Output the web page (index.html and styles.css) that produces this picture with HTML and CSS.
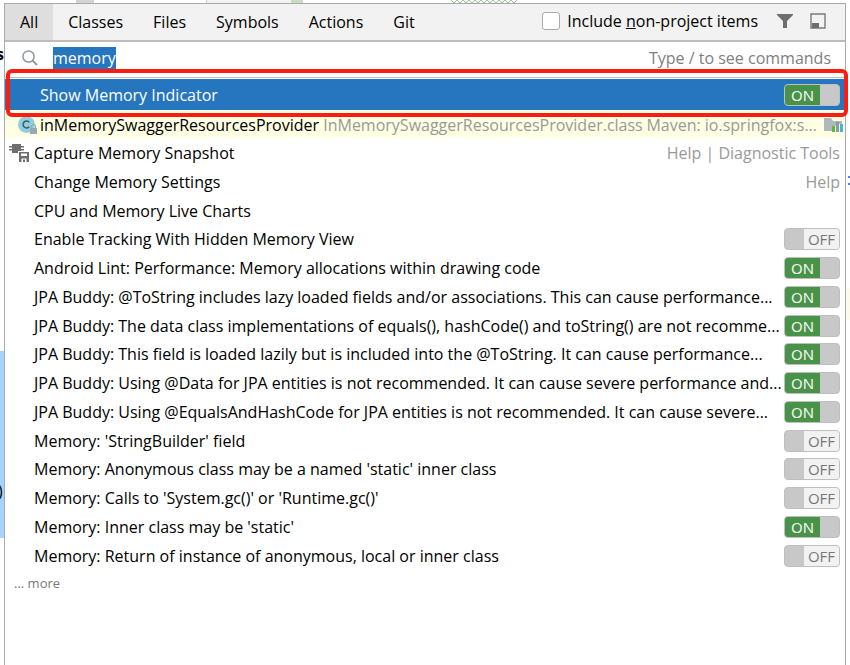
FILE: index.html
```
<!DOCTYPE html>
<html lang="en">
<head>
    <meta charset="utf-8">
    <title>Search Everywhere</title>
    <link rel="stylesheet" href="styles.css">
</head>
<body>
    <!-- bits of the editor that show around the popup -->
    <div class="editor" aria-hidden="true">
        <span class="gutter-mark"></span>
        <span class="change-mark"></span>
        <span class="tab-edge"></span>
        <span class="selection"></span>
        <span class="caret-line"></span>
        <span class="code code-s">s</span>
        <span class="code code-paren">)</span>
        <span class="code code-colon">:</span>
        <svg class="squiggle" width="68" height="3" viewBox="0 0 68 3">
            <path d="M0 0l3 3 3-3 3 3 3-3 3 3 3-3 3 3 3-3 3 3 3-3 3 3 3-3 3 3 3-3 3 3 3-3 3 3 3-3 3 3 3-3 3 3 3-3" fill="none" stroke="#9cc59c"/>
        </svg>
    </div>

    <div class="popup">
        <div class="header">
            <div class="tabs">
                <button type="button" class="tab active">All</button>
                <button type="button" class="tab">Classes</button>
                <button type="button" class="tab">Files</button>
                <button type="button" class="tab">Symbols</button>
                <button type="button" class="tab">Actions</button>
                <button type="button" class="tab">Git</button>
            </div>
            <div class="options">
                <input type="checkbox" id="non-project">
                <label for="non-project">Include <u>n</u>on-project items</label>
                <button type="button" class="icon-button" aria-label="Filter">
                    <svg width="16" height="16" viewBox="0 0 16 16"><path d="M0 1h16v1L10 8v7H6V8L0 2z" fill="#6e6e6e"/></svg>
                </button>
                <button type="button" class="icon-button" aria-label="Open in tool window">
                    <svg width="16" height="16" viewBox="0 0 16 16"><path d="M1 1h14v14H1z" fill="none" stroke="#7a7a7a" stroke-width="1.4"/><path d="M2 10h7v5H2z" fill="#6e6e6e"/></svg>
                </button>
            </div>
        </div>

        <div class="search">
            <svg width="16" height="16" viewBox="0 0 16 16"><circle cx="6.5" cy="6.5" r="5.6" fill="none" stroke="#8f979d" stroke-width="1.5"/><path d="M10.5 10.5l4.5 4.5" stroke="#8f979d" stroke-width="1.8"/></svg>
            <input type="text" id="query" class="query" value="memory" size="6" aria-label="Search">
            <label for="query" class="hint">Type / to see commands</label>
        </div>

        <ul class="results">
            <li class="row selected">
                <span class="name">Show Memory Indicator</span>
                <button type="button" class="toggle on" role="switch" aria-checked="true"><span>ON</span></button>
                <span class="highlight"></span>
            </li>
            <li class="row library">
                <svg class="class-icon" width="19" height="18" viewBox="0 0 19 18">
                    <circle cx="8.5" cy="8.5" r="8.5" fill="#8fd0de"/>
                    <path d="M11.3 6.2A3.5 3.5 0 1 0 11.3 10.7" fill="none" stroke="#3d5b66" stroke-width="1.5"/>
                    <path d="M12 12h7v6h-7z" fill="#9aa7b0"/>
                    <path d="M13.5 12v-1.5a2 2 0 0 1 4 0V12" fill="none" stroke="#9aa7b0" stroke-width="1.2"/>
                </svg>
                <span class="name">inMemorySwaggerResourcesProvider <span class="file">InMemorySwaggerResourcesProvider.class</span></span>
                <span class="place">Maven: io.springfox:s...</span>
                <svg class="lib-icon" width="19" height="16" viewBox="0 0 19 16">
                    <path d="M0 1h7l2 3h9v3h-5v2H8v5H0z" fill="#aeb8bd"/>
                    <path d="M8 9h3v6H8z" fill="#62b543"/>
                    <path d="M12 5h3v10h-3z" fill="#8c9ba0"/>
                    <path d="M16 7h3v8h-3z" fill="#40b6e0"/>
                </svg>
            </li>
            <li class="row">
                <svg class="snapshot-icon" width="20" height="18" viewBox="0 0 20 18">
                    <path d="M3 0h9v9H3zM0 2h15v1.5H0zM0 5h15v1.5H0z" fill="#6e6e6e"/>
                    <path d="M9 7h11v11H9z" fill="#fff"/>
                    <path d="M10 8h10v10H10z" fill="#6e6e6e"/>
                    <path d="M12 9.5h6V12h-6zM12.5 14.5h5V18h-5z" fill="#fff"/>
                    <path d="M14 15.5h2V18h-2z" fill="#6e6e6e"/>
                </svg>
                <span class="name">Capture Memory Snapshot</span>
                <span class="place">Help | Diagnostic Tools</span>
            </li>
            <li class="row">
                <span class="name">Change Memory Settings</span>
                <span class="place">Help</span>
            </li>
            <li class="row">
                <span class="name">CPU and Memory Live Charts</span>
            </li>
            <li class="row">
                <span class="name">Enable Tracking With Hidden Memory View</span>
                <button type="button" class="toggle" role="switch" aria-checked="false"><span>OFF</span></button>
            </li>
            <li class="row">
                <span class="name">Android Lint: Performance: Memory allocations within drawing code</span>
                <button type="button" class="toggle on" role="switch" aria-checked="true"><span>ON</span></button>
            </li>
            <li class="row">
                <span class="name">JPA Buddy: @ToString includes lazy loaded fields and/or associations. This can cause performance...</span>
                <button type="button" class="toggle on" role="switch" aria-checked="true"><span>ON</span></button>
            </li>
            <li class="row">
                <span class="name">JPA Buddy: The data class implementations of equals(), hashCode() and toString() are not recomme...</span>
                <button type="button" class="toggle on" role="switch" aria-checked="true"><span>ON</span></button>
            </li>
            <li class="row">
                <span class="name">JPA Buddy: This field is loaded lazily but is included into the @ToString. It can cause performance...</span>
                <button type="button" class="toggle on" role="switch" aria-checked="true"><span>ON</span></button>
            </li>
            <li class="row">
                <span class="name">JPA Buddy: Using @Data for JPA entities is not recommended. It can cause severe performance and...</span>
                <button type="button" class="toggle on" role="switch" aria-checked="true"><span>ON</span></button>
            </li>
            <li class="row">
                <span class="name">JPA Buddy: Using @EqualsAndHashCode for JPA entities is not recommended. It can cause severe...</span>
                <button type="button" class="toggle on" role="switch" aria-checked="true"><span>ON</span></button>
            </li>
            <li class="row">
                <span class="name">Memory: 'StringBuilder' field</span>
                <button type="button" class="toggle" role="switch" aria-checked="false"><span>OFF</span></button>
            </li>
            <li class="row">
                <span class="name">Memory: Anonymous class may be a named 'static' inner class</span>
                <button type="button" class="toggle" role="switch" aria-checked="false"><span>OFF</span></button>
            </li>
            <li class="row">
                <span class="name">Memory: Calls to 'System.gc()' or 'Runtime.gc()'</span>
                <button type="button" class="toggle" role="switch" aria-checked="false"><span>OFF</span></button>
            </li>
            <li class="row">
                <span class="name">Memory: Inner class may be 'static'</span>
                <button type="button" class="toggle on" role="switch" aria-checked="true"><span>ON</span></button>
            </li>
            <li class="row">
                <span class="name">Memory: Return of instance of anonymous, local or inner class</span>
                <button type="button" class="toggle" role="switch" aria-checked="false"><span>OFF</span></button>
            </li>
        </ul>
        <a href="#" class="more">... more</a>
    </div>

    <script>
        const query = document.getElementById("query");
        query.focus();
        query.select();
    </script>
</body>
</html>
```
FILE: styles.css
```
* {
    box-sizing: border-box;
}

body {
    display: flex;
    min-height: 100vh;
    margin: 0;
    padding: 3px 4px 0;
    overflow: hidden;
    background: #fff;
    color: #000;
    font-family: "Open Sans", "Noto Sans", sans-serif;
    font-size: 16px;
    line-height: 20px;
}

button, input {
    font: inherit;
    color: inherit;
}

.popup {
    position: relative;
    flex: 1;
    min-width: 0;
    background: #fff;
    border: 1px solid #a9a9a9;
    border-bottom: none;
}

.header {
    display: flex;
    justify-content: space-between;
    height: 38px;
    background: #f2f2f2;
    border-bottom: 2px solid #bdbdbd;
}

.tabs, .options {
    display: flex;
    align-items: center;
}

.tab {
    height: 100%;
    padding: 0 15px;
    border: none;
    background: none;
}

.tab.active {
    background: #dedede;
}

.options {
    padding: 0 19px 2px 0;
}

.options input {
    appearance: none;
    width: 18px;
    height: 18px;
    margin: 0 7px 0 0;
    background: #fff;
    border: 1px solid #aaa;
    border-radius: 3px;
}

.icon-button {
    display: flex;
    margin-left: 17px;
    padding: 0;
    border: none;
    background: none;
}

.options label + .icon-button {
    margin-left: 19px;
}

.search {
    display: flex;
    align-items: center;
    height: 36px;
    padding: 0 14px 3px 17px;
    border-bottom: 1px solid #bdbdbd;
}

.query {
    flex: 1;
    min-width: 0;
    height: 22px;
    margin-left: 15px;
    padding: 0;
    border: none;
    outline: none;
    background: none;
}

.query::selection {
    background: #2675bf;
    color: #fff;
}

.hint {
    color: #808080;
}

.results {
    margin: 1px 0 0;
    padding: 0;
    list-style: none;
}

.row {
    position: relative;
    display: flex;
    align-items: center;
    height: 29px;
    padding: 0 5px 0 29px;
}

.row:nth-child(4n + 2) {
    height: 28px;
}

.row.selected {
    height: 31px;
    padding-left: 35px;
    background: #2675bf;
    color: #fff;
}

.row.library {
    padding: 2px 2px 0 35px;
    background: #ffffe4;
}

.name {
    flex: 1;
    min-width: 0;
    white-space: nowrap;
}

.file, .place {
    color: #999;
}

.place {
    white-space: nowrap;
}

.class-icon {
    position: absolute;
    left: 13px;
    top: 6px;
}

.lib-icon {
    margin-left: 7px;
}

.snapshot-icon {
    position: absolute;
    left: 4px;
    top: 6px;
}

.highlight {
    position: absolute;
    top: -10px;
    right: -3px;
    bottom: -7px;
    left: 1px;
    z-index: 1;
    border: 4px solid #fb1d12;
    border-radius: 6px;
    pointer-events: none;
}

.toggle {
    display: flex;
    width: 56px;
    height: 22px;
    padding: 0;
    overflow: hidden;
    background: #c8c8c8;
    border: 1px solid #bfbfbf;
    border-radius: 4px;
    line-height: 21px;
}

.toggle span {
    width: 35px;
    margin-left: auto;
    background: #f2f2f2;
    color: #777;
    font-size: 15px;
    text-align: center;
}

.toggle.on span {
    margin-left: 0;
    background: #499349;
    color: #fff;
}

.more {
    display: block;
    padding: 3px 9px;
    color: #777;
    font-size: 13px;
    text-decoration: none;
}

/* editor behind the popup */
.editor {
    position: absolute;
    inset: 0;
    overflow: hidden;
}

.editor > * {
    position: absolute;
}

.gutter-mark {
    left: 76px;
    top: 0;
    width: 18px;
    height: 3px;
    background: #d4d4d4;
}

.change-mark {
    left: 291px;
    top: 0;
    width: 12px;
    height: 3px;
    background: #c9dec1;
}

.tab-edge {
    left: 206px;
    top: 0;
    width: 85px;
    height: 3px;
    background: #f2f2f2;
    border-left: 1px solid #ccc;
}

.selection {
    left: 0;
    top: 351px;
    width: 5px;
    height: 187px;
    background: #a6d2ff;
}

.caret-line {
    right: 0;
    top: 288px;
    width: 4px;
    height: 32px;
    background: #fcfaed;
}

.code-s {
    left: -4px;
    top: 44px;
    font-weight: bold;
}

.code-paren {
    left: -2px;
    top: 481px;
}

.code-colon {
    right: -1px;
    top: 169px;
    color: #1750eb;
}

.squiggle {
    left: 451px;
    top: 0;
}
```
